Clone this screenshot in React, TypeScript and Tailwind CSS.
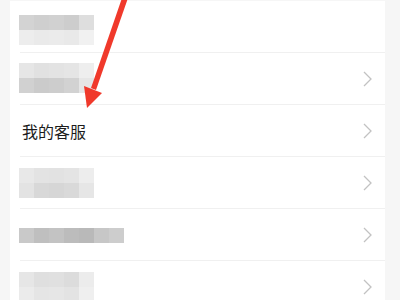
import React from 'react';

type Row = { label?: string; cells?: string[][]; chevron?: boolean; offset?: string };

const rows: Row[] = [
  {
    cells: [
      ['#d3d3d3', '#cfcfcf', '#d1d1d1', '#cdcdcd', '#dedede'],
      ['#ededed', '#eaeaea', '#ebebeb', '#e9e9e9', '#f1f1f1'],
    ],
    chevron: false,
    offset: 'mt-[6px]',
  },
  {
    cells: [
      ['#e6e6e6', '#e1e1e1', '#e3e3e3', '#e5e5e5', '#eeeeee'],
      ['#d1d1d1', '#cbcbcb', '#cdcdcd', '#d2d2d2', '#e6e6e6'],
    ],
    chevron: true,
    offset: 'mt-[-2px]',
  },
  { label: '我的客服', chevron: true },
  {
    cells: [
      ['#e8e8e8', '#e3e3e3', '#e2e2e2', '#e4e4e4', '#ededed'],
      ['#e3e3e3', '#d8d8d8', '#d6d6d6', '#d9d9d9', '#e6e6e6'],
    ],
    chevron: true,
  },
  {
    cells: [['#c9c9c9', '#bfbfbf', '#c3c3c3', '#bcbcbc', '#b9b9b9', '#c7c7c7', '#cdcdcd']],
    chevron: true,
  },
  {
    cells: [
      ['#e6e6e6', '#dfdfdf', '#e0e0e0', '#dcdcdc', '#ececec'],
      ['#ebebeb', '#e5e5e5', '#e6e6e6', '#e3e3e3', '#efefef'],
    ],
    chevron: true,
  },
];

function Chevron() {
  return (
    <svg width="12" height="18" viewBox="0 0 12 18" className="mr-[12px]">
      <path d="M3 2 L10 9 L3 16" fill="none" stroke="#c2c2c2" strokeWidth="1.3" />
    </svg>
  );
}

function Mosaic({ cells, offset }: { cells: string[][]; offset?: string }) {
  return (
    <div className={`flex flex-col ${offset ?? ''}`}>
      {cells.map((r, i) => (
        <div key={i} className="flex">
          {r.map((c, j) => (
            <div key={j} className="w-[15px] h-[15px]" style={{ backgroundColor: c }} />
          ))}
        </div>
      ))}
    </div>
  );
}

export default function App() {
  return (
    <div
      className="relative w-[400px] h-[300px] overflow-hidden bg-[#f6f6f6] pl-[10px] pr-[15px] pt-px"
      style={{ fontFamily: '"Noto Sans CJK SC", "Noto Sans", sans-serif' }}
    >
      <div className="bg-white">
        {rows.map((row, i) => (
          <div key={i} className="relative h-[52px] flex items-center justify-between pl-[9px]">
            {row.label ? (
              <span className="text-[16px] text-[#1c1c1c] pl-[3px]">{row.label}</span>
            ) : (
              <Mosaic cells={row.cells!} offset={row.offset} />
            )}
            {row.chevron && <Chevron />}
            <div className="absolute left-[10px] right-0 bottom-0 h-px bg-[#f0f0f0]" />
          </div>
        ))}
      </div>
      <svg className="absolute left-0 top-0" width="400" height="300" viewBox="0 0 400 300">
        <polygon points="122,-2 128,-2 96,90 91,88" fill="#f0392b" />
        <polygon points="87,108 84,86 102,93" fill="#f0392b" />
      </svg>
    </div>
  );
}
